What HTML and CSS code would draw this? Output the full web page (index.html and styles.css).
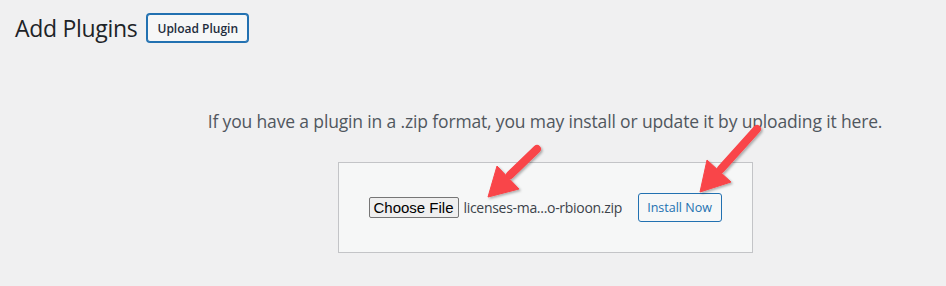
FILE: index.html
```html
<!DOCTYPE html>
<html lang="en">
<head>
    <meta charset="UTF-8">
    <meta name="viewport" content="width=device-width, initial-scale=1.0">
    <title>Add Plugins</title>
    <link rel="stylesheet" href="styles.css">
</head>
<body>
    <div class="page">
        <div class="page-header">
            <h1>Add Plugins</h1>
            <button class="title-action">Upload Plugin</button>
        </div>

        <div class="upload-plugin">
            <p class="install-help">If you have a plugin in a .zip format, you may install or update it by uploading it here.</p>
            <form class="upload-form">
                <div class="file-field">
                    <button type="button" class="file-button">Choose File</button>
                    <span class="file-name">licenses-ma...o-rbioon.zip</span>
                </div>
                <button type="button" class="install-button">Install Now</button>
            </form>
        </div>
    </div>

    <!-- annotation arrows drawn over the screenshot -->
    <svg class="arrows" width="946" height="286" viewBox="0 0 946 286">
        <defs>
            <filter id="shadow" x="-20%" y="-20%" width="140%" height="140%">
                <feDropShadow dx="1.5" dy="1.5" stdDeviation="1.2" flood-color="#000" flood-opacity="0.3"/>
            </filter>
        </defs>
        <g filter="url(#shadow)" fill="#f94448" stroke="#f94448">
            <line x1="537" y1="149" x2="510" y2="175" stroke-width="8" stroke-linecap="round"/>
            <polygon points="488,197 519,189 497,166" stroke-width="1" stroke-linejoin="round"/>
            <line x1="757" y1="129" x2="721" y2="169" stroke-width="8" stroke-linecap="round"/>
            <polygon points="700,192 731,182 707,160" stroke-width="1" stroke-linejoin="round"/>
        </g>
    </svg>
</body>
</html>
```

FILE: styles.css
```css
html, body {
    overflow: hidden;
}
body {
    font-family: "Open Sans", "Noto Sans", sans-serif;
    background-color: #f0f0f1;
    color: #3c434a;
    margin: 0;
    width: 946px;
    height: 286px;
    position: relative;
}
.page-header {
    display: flex;
    align-items: center;
    gap: 9px;
    padding: 12px 0 0 15px;
}
h1 {
    font-size: 23px;
    font-weight: 400;
    color: #1d2327;
    margin: 0;
    letter-spacing: -0.3px;
}
.title-action {
    font-family: "Open Sans", sans-serif;
    font-size: 12px;
    font-weight: 600;
    color: #1d2c3c;
    background-color: #f6f7f7;
    border: 1px solid #2271b1;
    box-shadow: 0 0 0 1px #2271b1;
    border-radius: 3px;
    height: 28px;
    padding: 0 9px;
    margin-left: 1px;
}
.upload-plugin {
    text-align: center;
    padding-left: 144px;
}
.install-help {
    font-size: 17.5px;
    color: #50575e;
    margin: 0;
    padding-top: 65px;
    letter-spacing: -0.15px;
}
.upload-form {
    display: inline-flex;
    justify-content: space-between;
    align-items: center;
    width: 353px;
    background-color: #f6f7f7;
    border: 1px solid #c3c4c7;
    padding: 30px;
    margin-top: 29px;
}
.file-field {
    display: flex;
    align-items: center;
    gap: 5px;
}
.file-button {
    font-family: "Liberation Sans", Arial, sans-serif;
    font-size: 15px;
    color: #000;
    background-color: #efefef;
    border: 1px solid #767676;
    border-radius: 2px;
    width: 90px;
    height: 21px;
    padding: 0;
}
.file-name {
    font-size: 14px;
    color: #3c434a;
    letter-spacing: -0.3px;
}
.install-button {
    font-family: "Open Sans", sans-serif;
    font-size: 12.5px;
    color: #2271b1;
    background-color: #f6f7f7;
    border: 1px solid #2271b1;
    border-radius: 3px;
    width: 84px;
    height: 29px;
    padding: 0;
}
.arrows {
    position: absolute;
    top: 0;
    left: 0;
    pointer-events: none;
}
```
